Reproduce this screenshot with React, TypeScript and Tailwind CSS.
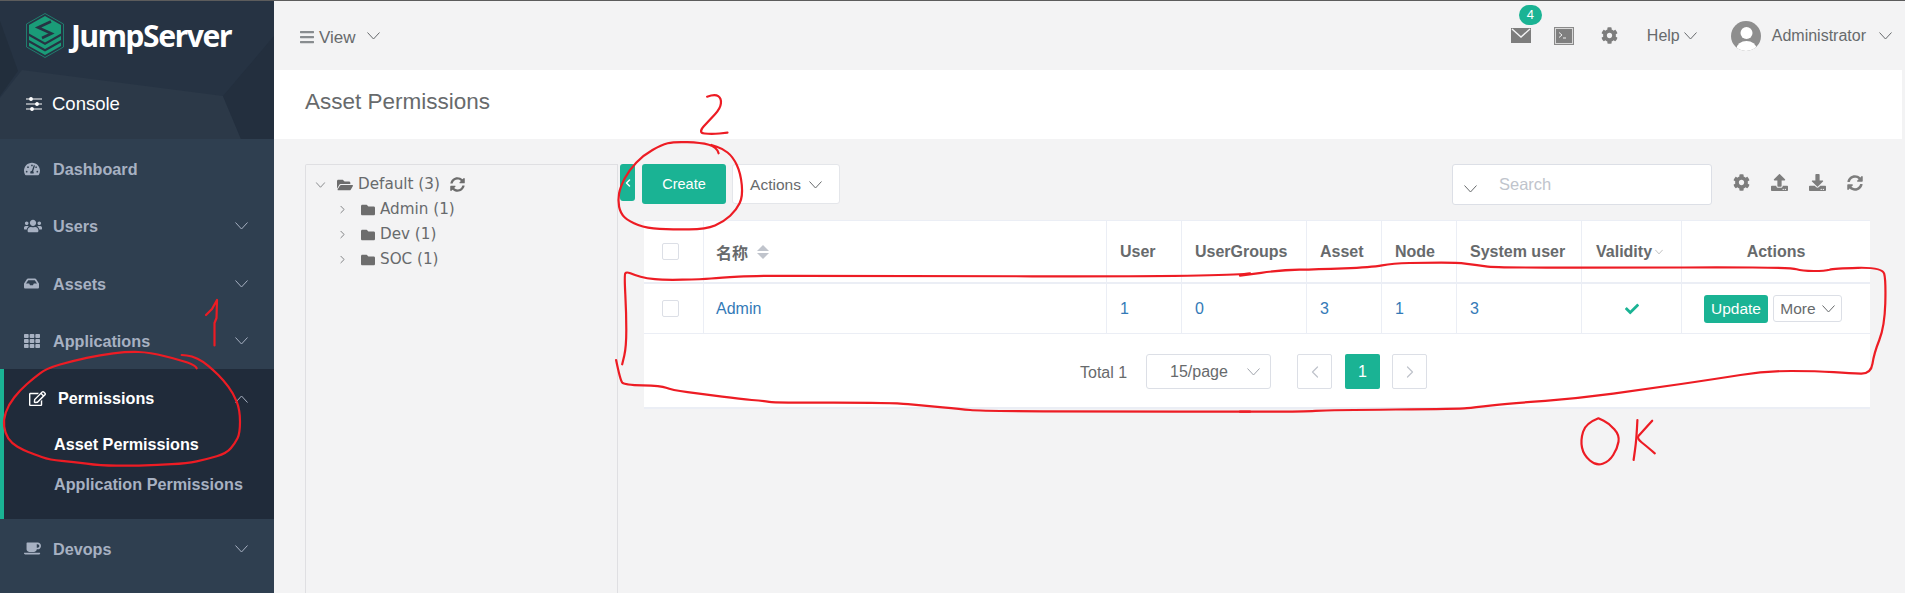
import React from "react";
import { ChevronLeft, ChevronRight } from "lucide-react";
import {
  FaBars,
  FaCheck,
  FaCoffee,
  FaCog,
  FaDownload,
  FaFolder,
  FaFolderOpen,
  FaInbox,
  FaRegEdit,
  FaSyncAlt,
  FaTachometerAlt,
  FaTh,
  FaUpload,
  FaUsers,
} from "react-icons/fa";

type Pt = [number, number];

// scribbles were read off zoomed crops, so each one carries its crop's origin and scale
const stroke = (pts: Pt[], x0: number, y0: number, sx: number, sy = 3) => {
  const p = pts.map(([u, v]): Pt => [x0 + u / sx, y0 + v / sy]);
  let d = `M${p[0][0].toFixed(1)} ${p[0][1].toFixed(1)}`;
  for (let i = 1; i < p.length - 1; i++) {
    const mx = (p[i][0] + p[i + 1][0]) / 2;
    const my = (p[i][1] + p[i + 1][1]) / 2;
    d += ` Q${p[i][0].toFixed(1)} ${p[i][1].toFixed(1)} ${mx.toFixed(1)} ${my.toFixed(1)}`;
  }
  const last = p[p.length - 1];
  return d + ` L${last[0].toFixed(1)} ${last[1].toFixed(1)}`;
};

const scribbles = [
  stroke(
    [[590, 205], [585, 195], [540, 180], [450, 157], [380, 155], [300, 165], [220, 182], [140, 205], [100, 235], [60, 270], [25, 315], [10, 360], [15, 400], [35, 430], [70, 450], [100, 462], [150, 480], [220, 485], [300, 497], [400, 497], [470, 495], [560, 490], [620, 478], [680, 460], [705, 430], [720, 400], [720, 330], [700, 280], [670, 240], [640, 210], [610, 185], [575, 168], [545, 165]],
    0, 300, 3,
  ),
  "M206 315 L212 309 L217 300 L216.5 318 L214.5 323 L214.5 345.5",
  stroke(
    [[1200, 460], [1195, 440], [1150, 428], [1075, 425], [1040, 435], [990, 465], [950, 510], [925, 560], [918, 600], [925, 640], [950, 665], [1000, 685], [1070, 688], [1165, 688], [1215, 665], [1250, 630], [1268, 590], [1262, 520], [1240, 470], [1210, 445], [1180, 435]],
    290, 0, 2.8,
  ),
  stroke([[1168, 290], [1190, 282], [1208, 295], [1205, 325], [1175, 360], [1142, 398], [1180, 403], [1225, 398]], 290, 0, 2.8),
  stroke(
    [[15, 450], [25, 510], [35, 525], [125, 527], [150, 540], [230, 553], [320, 567], [375, 573], [405, 578], [690, 578], [770, 587], [860, 597], [905, 603], [1218, 605], [1568, 605]],
    610, 210, 2.45,
  ),
  stroke(
    [[0, 605], [140, 605], [215, 600], [520, 597], [550, 592], [640, 580], [800, 565], [960, 537], [1120, 507], [1240, 483], [1360, 483], [1440, 490], [1488, 492], [1495, 430], [1520, 350], [1523, 210], [1515, 172], [1400, 175], [1380, 183], [1325, 183], [1300, 173], [1118, 172], [980, 173], [600, 173], [560, 165], [510, 158], [440, 158], [360, 160], [310, 172], [180, 178], [100, 180], [0, 197]],
    1240, 210, 2.358,
  ),
  stroke(
    [[1568, 190], [1530, 200], [540, 198], [360, 197], [270, 203], [225, 208], [130, 210], [90, 205], [60, 195], [40, 185], [35, 195], [40, 310], [40, 410], [30, 463]],
    610, 210, 2.45,
  ),
  stroke([[845, 625], [815, 640], [803, 690], [810, 735], [840, 768], [870, 755], [890, 715], [895, 675], [870, 640], [845, 625]], 1240, 210, 2.358),
  stroke([[937, 630], [935, 690], [928, 750]], 1240, 210, 2.358),
  stroke([[972, 632], [945, 670], [935, 685], [960, 710], [978, 730]], 1240, 210, 2.358),
];

// the thin element-ui style arrow, wider than any lucide chevron at this size
const Arrow = ({ up, className }: { up?: boolean; className?: string }) => (
  <svg width="13" height="8" viewBox="0 0 13 8" fill="none" stroke="currentColor" strokeWidth="1" className={`shrink-0 ${className ?? ""}`}>
    <path d={up ? "M.5 7.5 L6.5 1 L12.5 7.5" : "M.5 .5 L6.5 7 L12.5 .5"} />
  </svg>
);

const JumpLogo = () => (
  <svg width="38" height="45" viewBox="0 0 38 45" className="shrink-0">
    <path d="M19 .5 L37.5 11 V34 L19 44.5 L.5 34 V11 Z" fill="none" stroke="#1f8f78" strokeWidth="0.8" />
    <path d="M19 3 L35 12 V20.5 L19 29.5 L3 20.5 V12 Z" fill="#1a9c78" />
    <path d="M3 23 L19 32 L35 23 V27 L19 36 L3 27 Z" fill="#1a9c78" />
    <path d="M3 29.5 L19 38.5 L35 29.5 V33 L19 42 L3 33 Z" fill="#1a9c78" />
    <path d="M25 8.5 L12 14.5 L25.5 20.5 L16 25" fill="none" stroke="#263343" strokeWidth="2.6" />
  </svg>
);

const SlidersIcon = () => (
  <svg width="16" height="14" viewBox="0 0 16 14" fill="none" stroke="#fff" strokeWidth="1.2">
    <path d="M0 2h16M0 7h16M0 12h16" />
    <circle cx="5" cy="2" r="1.3" fill="#fff" />
    <circle cx="11" cy="7" r="1.3" fill="#fff" />
    <circle cx="6" cy="12" r="1.3" fill="#fff" />
  </svg>
);

const MailIcon = () => (
  <svg width="20" height="15" viewBox="0 0 20 15">
    <rect width="20" height="15" fill="#7d7d7d" />
    <path d="M1 1 L10 9 L19 1" fill="none" stroke="#f3f3f4" strokeWidth="1.4" />
  </svg>
);

const TerminalIcon = () => (
  <svg width="20" height="18" viewBox="0 0 20 18">
    <rect x="0.5" y="0.5" width="19" height="17" fill="#d8d8d8" stroke="#8a8a8a" />
    <rect x="2" y="2" width="16" height="14" fill="#7f7f7f" />
    <path d="M5 5.5 L8 8 L5 10.5" fill="none" stroke="#eee" />
    <path d="M9 11h3" stroke="#eee" />
  </svg>
);

const Avatar = () => (
  <svg width="30" height="30" viewBox="0 0 30 30">
    <defs>
      <clipPath id="avatar-clip">
        <circle cx="15" cy="15" r="15" />
      </clipPath>
    </defs>
    <g clipPath="url(#avatar-clip)">
      <rect width="30" height="30" fill="#8e8e8e" />
      <circle cx="15.5" cy="12" r="6" fill="#fff" />
      <ellipse cx="15.5" cy="28" rx="10" ry="8" fill="#fff" />
    </g>
  </svg>
);

const SortIcon = () => (
  <svg width="12" height="14" viewBox="0 0 12 14" fill="#c0c4cc" className="ml-[9px]">
    <path d="M6 0 L12 6 H0 Z" />
    <path d="M0 8 H12 L6 14 Z" />
  </svg>
);

const navItems = [
  { label: "Dashboard", icon: <FaTachometerAlt size={16} /> },
  { label: "Users", icon: <FaUsers size={18} />, arrow: true },
  { label: "Assets", icon: <FaInbox size={15} />, arrow: true },
  { label: "Applications", icon: <FaTh size={16} />, arrow: true },
];

const NavRow = ({ label, icon, arrow }: { label: string; icon: React.ReactNode; arrow?: boolean }) => (
  <div className="flex h-[57.5px] items-center pt-[2px] pl-6 pr-[26px] text-[#a7b1c2]">
    <span className="flex w-[29px] shrink-0">{icon}</span>
    <span className="flex-1 text-[16.2px] font-bold">{label}</span>
    {arrow && <Arrow />}
  </div>
);

const treeNodes = ["Admin (1)", "Dev (1)", "SOC (1)"];

const headers = [
  { label: "User", w: "w-[75px]" },
  { label: "UserGroups", w: "w-[125px]" },
  { label: "Asset", w: "w-[75px]" },
  { label: "Node", w: "w-[75px]" },
  { label: "System user", w: "w-[125px]" },
];

const rowValues = [
  { value: "1", w: "w-[75px]" },
  { value: "0", w: "w-[125px]" },
  { value: "3", w: "w-[75px]" },
  { value: "1", w: "w-[75px]" },
  { value: "3", w: "w-[125px]" },
];

const Checkbox = () => <div className="size-[17px] rounded-[2px] border border-[#dcdfe6] bg-white" />;

const App = () => {
  return (
    <div className="relative flex h-[593px] w-[1905px] overflow-hidden border-t border-[#5c5c5c] bg-[#f3f3f4] font-['Liberation_Sans',sans-serif] text-[#676a6c]">
      <aside className="flex w-[274px] shrink-0 flex-col bg-[#2f3f50]">
        <div className="relative h-[138px] shrink-0 overflow-hidden bg-[#263343]">
          <svg className="absolute inset-0" width="274" height="138" viewBox="0 0 274 138">
            <path d="M0 97 L22 69 L223 95 L241 138 L0 138 Z" fill="#2c3948" />
            <path d="M0 20 L18 70 L0 95 Z" fill="#222e3c" />
            <path d="M223 95 L274 35 V138 H241 Z" fill="#232f3e" />
          </svg>
          <div className="relative flex h-[69px] items-center gap-[7px] pl-[26px]">
            <JumpLogo />
            <span className="font-['Noto_Sans',sans-serif] text-[30px] font-bold tracking-[-1.4px] text-white">JumpServer</span>
          </div>
          <div className="relative flex h-[69px] items-center gap-[10px] pb-[2px] pl-[26px] text-white">
            <SlidersIcon />
            <span className="text-[18.5px]">Console</span>
          </div>
        </div>
        {navItems.map((item) => (
          <NavRow key={item.label} {...item} />
        ))}
        <div className="flex h-[150px] shrink-0 flex-col border-l-4 border-[#1ab394] bg-[#202b3a]">
          <div className="flex h-[57px] shrink-0 items-center pt-[2px] pl-[25px] pr-[26px] text-white">
            <span className="flex w-[29px] shrink-0">
              <FaRegEdit size={17} />
            </span>
            <span className="flex-1 text-[16.2px] font-bold">Permissions</span>
            <Arrow up className="text-[#a7b1c2]" />
          </div>
          <div className="mt-2 flex h-[20px] shrink-0 items-center pl-[50px] text-[16.2px] font-bold text-white">Asset Permissions</div>
          <div className="mt-5 flex h-[20px] shrink-0 items-center pl-[50px] text-[16.2px] font-bold text-[#a7b1c2]">Application Permissions</div>
        </div>
        <NavRow label="Devops" icon={<FaCoffee size={17} />} arrow />
      </aside>

      <main className="flex min-w-0 flex-1 flex-col">
        <header className="flex h-[69px] shrink-0 items-center pl-[25px] pr-[13px]">
          <FaBars size={16} className="mt-[2px] text-[#888c8f]" />
          <span className="ml-1 pt-1 text-[17px]">View</span>
          <Arrow className="ml-[11px]" />
          <div className="ml-auto flex items-center">
            <div className="relative flex">
              <MailIcon />
              <span className="absolute -top-[23px] left-[8px] flex h-5 w-[23px] items-center justify-center rounded-full bg-[#1ab394] text-[13px] text-white">4</span>
            </div>
            <span className="ml-[23px] flex">
              <TerminalIcon />
            </span>
            <FaCog size={17} className="ml-[27px] text-[#7d7d7d]" />
            <span className="ml-[29px] text-[16px]">Help</span>
            <Arrow className="ml-1" />
            <span className="ml-[34px] flex">
              <Avatar />
            </span>
            <span className="ml-[11px] text-[16px]">Administrator</span>
            <Arrow className="ml-[13px]" />
          </div>
        </header>

        <div className="mr-[3px] flex h-[69px] shrink-0 items-center bg-white pb-[6px] pl-[31px]">
          <h2 className="text-[22.5px] font-normal">Asset Permissions</h2>
        </div>

        <div className="flex min-h-0 flex-1 pt-[25px] pl-[31px]">
          <div className="w-[313px] shrink-0 rounded-tl-[2px] border border-b-0 border-[#dfdfe2] pt-[7px] pl-2 font-['DejaVu_Sans',sans-serif] text-[15.2px]">
            <div className="flex h-[25px] items-center">
              <Arrow className="scale-75" />
              <FaFolderOpen size={16} className="ml-[10px] text-[#6d6d6d]" />
              <span className="ml-[5px]">Default (3)</span>
              <FaSyncAlt size={15} className="ml-[10px] text-[#6d6d6d]" />
            </div>
            {treeNodes.map((node) => (
              <div key={node} className="flex h-[25px] items-center pl-[22px]">
                <ChevronRight size={13} strokeWidth={1.5} />
                <FaFolder size={14} className="ml-3 text-[#6d6d6d]" />
                <span className="ml-[5px]">{node}</span>
              </div>
            ))}
          </div>

          <div className="ml-[2px] min-w-0 flex-1">
            <div className="flex items-start">
              <button className="flex h-[37px] w-[15px] items-center justify-center rounded-[3px] bg-[#1ab394] text-white">
                <ChevronLeft size={12} strokeWidth={3} />
              </button>
              <button className="ml-[7px] flex h-10 w-[84px] items-center justify-center rounded-[3px] bg-[#1ab394] pt-px text-[14.5px] text-white">Create</button>
              <button className="ml-[6px] flex h-10 w-[108px] items-center justify-center gap-2 rounded-[3px] border border-[#e4e6ea] bg-white pt-px text-[15.5px]">
                Actions
                <Arrow />
              </button>
              <div className="ml-[612px] flex h-[41px] w-[260px] items-center rounded-[3px] border border-[#dcdfe6] bg-white pl-[11px]">
                <Arrow className="mt-2" />
                <span className="ml-[22px] text-[16.5px] text-[#c0c4cc]">Search</span>
              </div>
              <div className="ml-[21px] flex h-[37px] items-center gap-[21px] text-[#7d7d7d]">
                <FaCog size={17} />
                <FaUpload size={17} />
                <FaDownload size={17} />
                <FaSyncAlt size={16} />
              </div>
            </div>

            <div className="mt-[15px] ml-6 w-[1226px] border-t border-[#ebeef5] bg-white shadow-[0_2px_0_#ebeef5]">
              <div className="flex h-[63px] border-b-2 border-[#ebeef5] text-[16px] font-bold">
                <div className="flex w-[60px] items-center justify-center border-r border-[#ebeef5] pr-[7px]">
                  <Checkbox />
                </div>
                <div className="flex w-[403px] items-center border-r border-[#ebeef5] pl-3 font-['Noto_Sans_CJK_SC',sans-serif]">
                  名称
                  <SortIcon />
                </div>
                {headers.map((h) => (
                  <div key={h.label} className={`flex ${h.w} items-center border-r border-[#ebeef5] pl-[13px]`}>
                    {h.label}
                  </div>
                ))}
                <div className="flex w-[100px] items-center gap-[3px] border-r border-[#ebeef5] pl-[14px]">
                  Validity
                  <Arrow className="w-2 text-[#9a9a9a]" />
                </div>
                <div className="flex flex-1 items-center justify-center">Actions</div>
              </div>
              <div className="flex h-[50px] border-b border-[#ebeef5] text-[16px] text-[#337ab7]">
                <div className="flex w-[60px] items-center justify-center border-r border-[#ebeef5] pr-[7px]">
                  <Checkbox />
                </div>
                <div className="flex w-[403px] items-center border-r border-[#ebeef5] pl-3">Admin</div>
                {rowValues.map((v, i) => (
                  <div key={i} className={`flex ${v.w} items-center border-r border-[#ebeef5] pl-[13px]`}>
                    {v.value}
                  </div>
                ))}
                <div className="flex w-[100px] items-center justify-center border-r border-[#ebeef5] text-[#1ab394]">
                  <FaCheck size={14} />
                </div>
                <div className="flex flex-1 items-center pl-[22px]">
                  <button className="flex h-7 w-16 items-center justify-center rounded-[3px] bg-[#1ab394] text-[15.5px] text-white">Update</button>
                  <button className="ml-[5px] flex h-[27px] w-[69px] items-center justify-center gap-[6px] rounded-[3px] border border-[#dcdfe6] text-[15.5px] text-[#676a6c]">
                    More
                    <Arrow />
                  </button>
                </div>
              </div>
              <div className="flex h-[73px] items-start pt-5 pl-[436px] text-[16px]">
                <span className="mt-[7px] w-[66px] shrink-0">Total 1</span>
                <div className="flex h-[35px] w-[125px] items-center justify-between rounded-[3px] border border-[#dcdfe6] pr-[10px] pl-[23px]">
                  15/page
                  <Arrow className="text-[#a0a4ac]" />
                </div>
                <button className="ml-[26px] flex size-[35px] items-center justify-center rounded-[2px] border border-[#dcdfe6] text-[#c0c4cc]">
                  <ChevronLeft size={20} strokeWidth={1.5} />
                </button>
                <button className="ml-[13px] flex size-[35px] items-center justify-center rounded-[2px] bg-[#1ab394] text-white">1</button>
                <button className="ml-3 flex size-[35px] items-center justify-center rounded-[2px] border border-[#dcdfe6] text-[#c0c4cc]">
                  <ChevronRight size={20} strokeWidth={1.5} />
                </button>
              </div>
            </div>
          </div>
        </div>
      </main>

      {/* red pen marks drawn on top of the screenshot */}
      <svg className="pointer-events-none absolute -top-px left-0" width="1905" height="593" fill="none" stroke="#ed1c24" strokeWidth="2.2" strokeLinejoin="round" strokeLinecap="round">
        {scribbles.map((d, i) => (
          <path key={i} d={d} />
        ))}
      </svg>
    </div>
  );
};

export default App;
